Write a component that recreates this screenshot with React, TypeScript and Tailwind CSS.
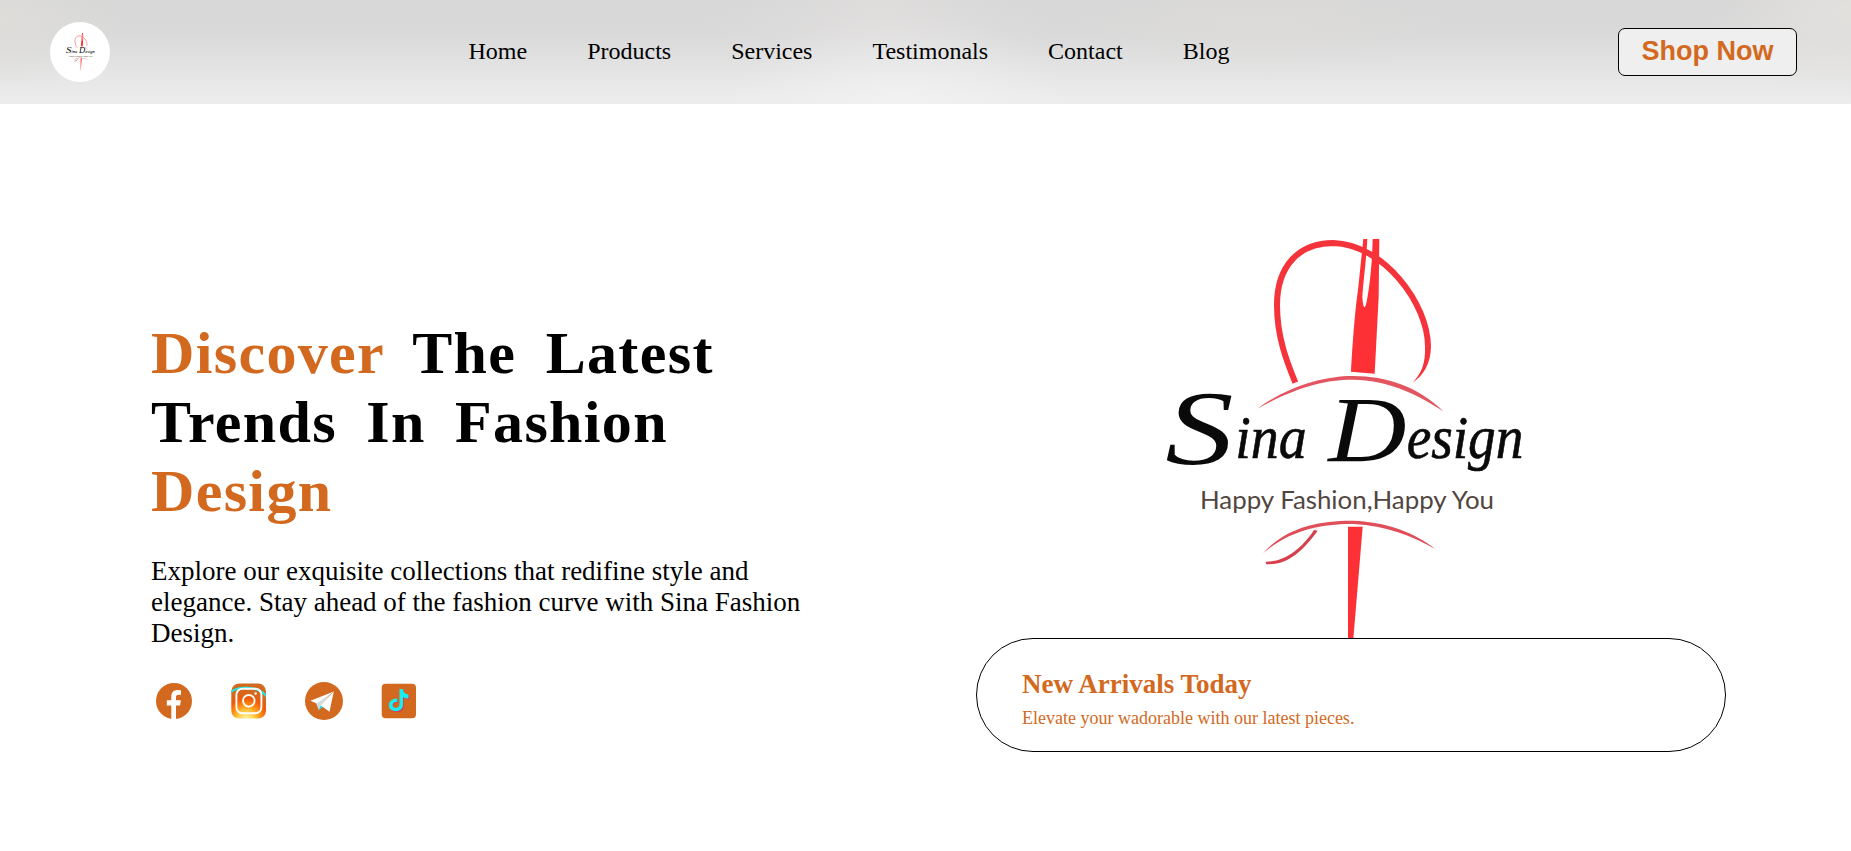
const navItems = ['Home', 'Products', 'Services', 'Testimonals', 'Contact', 'Blog'];

function Logo({ viewBox, className }: { viewBox: string; className: string }) {
  return (
    <svg viewBox={viewBox} className={className} preserveAspectRatio="none" role="img" aria-label="Sina Design">
      <path d="M676 -40 H708 L718 57 L716 230 L704 461 L633 455 C640 330 648 250 654 210 L670 57Z" fill="#fd3035" />
      <path d="M686 20 L682 57 C678 130 669 190 667 232 Q671 284 680 245 C690 195 697 120 698 57 L696 20Z" fill="#fff" />
      <path d="M466 488 C440 425 411 350 411 255 C411 140 475 69 580 69 C730 73 864 250 864 380" fill="none" stroke="#f5333a" strokeWidth="18" />
      <path d="M855 379 C857 430 845 460 818 488 C852 466 872 430 873 379Z" fill="#f5333a" />
      <path d="M352 566 C450 495 560 467 640 468 C740 468 835 500 910 574 C820 515 740 482 640 479 C560 478 470 500 352 566Z" fill="#e35560" />
      <path d="M369 1000 C440 920 540 901 640 902 C740 906 825 938 886 987 C815 948 740 917 640 912 C545 911 450 930 369 1000Z" fill="#e04e5a" />
      <path d="M522 930 L533 932 C490 992 440 1038 378 1032 L377 1025 C435 1026 486 985 522 930Z" fill="#d6404c" />
      <path d="M624 920 H668 L628 1400 H624Z" fill="#fd3035" />
      <g fontFamily="'Liberation Serif', serif" fontStyle="italic" fill="#0a0a0a" stroke="#0a0a0a" strokeWidth="2">
        <text x="76" y="732" fontSize="315" textLength="205" lengthAdjust="spacingAndGlyphs" strokeWidth="0">S</text>
        <text x="286" y="714" fontSize="186" textLength="214" lengthAdjust="spacingAndGlyphs">ina</text>
        <text x="565" y="722" fontSize="280" textLength="235" lengthAdjust="spacingAndGlyphs" strokeWidth="0">D</text>
        <text x="800" y="714" fontSize="186" textLength="350" lengthAdjust="spacingAndGlyphs">esign</text>
      </g>
      <text x="180" y="868" fontFamily="Lato, 'Noto Sans', sans-serif" fontSize="77" fill="#51463f" textLength="882" lengthAdjust="spacingAndGlyphs">
        Happy Fashion,Happy You
      </text>
    </svg>
  );
}

function Facebook() {
  return (
    <svg viewBox="0 0 44 44" className="size-11">
      <circle cx="22" cy="22" r="18" fill="#d2691e" />
      <path d="M19.300 40 V26.500 H14.800 V21.300 H19.300 V17.500 C19.300 13 22 11 25.700 11 C27.400 11 29 11.300 29 11.300 V15.700 H26.700 C24.600 15.700 24 16.900 24 18.300 V21.300 H28.900 L28.100 26.500 H24 V40Z" fill="#fff" />
    </svg>
  );
}

function Instagram() {
  return (
    <svg viewBox="0 0 44 44" className="size-11">
      <defs>
        <radialGradient id="glow" cx="0.42" cy="1.02" r="0.78">
          <stop offset="0" stopColor="#fff3b0" />
          <stop offset="0.28" stopColor="#ffd34a" />
          <stop offset="0.55" stopColor="#fb8a10" />
          <stop offset="0.75" stopColor="#f05a0c" />
          <stop offset="1" stopColor="#d2691e" />
        </radialGradient>
        <clipPath id="tile"><rect x="4.300" y="4.500" width="34.700" height="35" rx="8" /></clipPath>
      </defs>
      <g clipPath="url(#tile)">
        <rect x="4" y="4" width="36" height="36" fill="url(#glow)" />
        <path d="M4 13 C10 7.500 31 5.500 40 18" fill="none" stroke="#19e8e4" strokeWidth="2" />
      </g>
      <rect x="9.400" y="9.700" width="25" height="24.600" rx="6" fill="none" stroke="#fff" strokeWidth="1.900" />
      <circle cx="21.800" cy="21.800" r="5.800" fill="none" stroke="#fff" strokeWidth="1.900" />
      <circle cx="28.600" cy="14.500" r="1.200" fill="#fff" />
    </svg>
  );
}

function Telegram() {
  return (
    <svg viewBox="0 0 44 44" className="size-11">
      <circle cx="22" cy="22" r="19" fill="#d2691e" />
      <path d="M14.500 24 L17 31 L22 27Z" fill="#19e0dc" />
      <path d="M14 24 L31 12.500 L19 26 L16.800 31Z" fill="#d3dde0" />
      <path d="M8.500 21.800 L31.800 12.600 L14.500 24.400Z" fill="#fff" />
      <path d="M31.800 12.600 L27.500 32.800 L18.500 26.300Z" fill="#fff" />
    </svg>
  );
}

function TikTok() {
  const note = 'M22.500 10 H26 C26.300 13.500 28.500 15.300 31.500 15.600 V19.500 C29.400 19.500 27.500 18.900 26 17.900 V25.500 C26 33 16.500 34 12.800 29.500 C10 25 13.600 19 20.300 19.500 V23 C17 22.500 15.200 24.600 15.800 27 C17 30 22.500 29.400 22.500 25.300Z';
  return (
    <svg viewBox="0 0 44 44" className="size-11">
      <rect x="4.700" y="4.800" width="34.300" height="34.400" rx="4" fill="#d2691e" />
      <path d={note} fill="#d6336c" transform="translate(0.8 0.9)" />
      <path d={note} fill="#16f0ee" />
    </svg>
  );
}

export default function App() {
  return (
    <div className="flex h-[851px] flex-col overflow-hidden bg-white font-['Liberation_Serif',serif] text-black">
      <header className="flex h-[104px] shrink-0 items-center bg-[radial-gradient(ellipse_170px_90px_at_900px_104px,rgba(244,243,243,0.75),transparent),radial-gradient(ellipse_180px_70px_at_880px_15px,rgba(228,225,224,0.6),transparent),radial-gradient(ellipse_140px_90px_at_1851px_10px,rgba(230,227,224,0.8),transparent),radial-gradient(ellipse_200px_60px_at_1260px_20px,rgba(222,220,218,0.7),transparent),radial-gradient(ellipse_130px_70px_at_0px_20px,rgba(222,221,218,0.9),transparent),linear-gradient(to_bottom,#d7d7d7_0%,#dadada_35%,#e4e4e4_68%,#ececec_95%)] pl-[50px] pr-[54px]">
        <div className="flex size-[60px] items-center justify-center rounded-full bg-white">
          <Logo viewBox="0 -40 1200 1440" className="h-[38px] w-8" />
        </div>
        <nav className="ml-[358.500px] flex gap-[60px] pb-0.5 text-2xl leading-[27px]">
          {navItems.map((item) => (
            <a key={item} href="#">{item}</a>
          ))}
        </nav>
        <button className="ml-auto h-12 w-[179px] rounded-[7px] border border-black bg-[#efefef] pb-0.5 font-['Liberation_Sans',sans-serif] text-[27px] font-bold leading-[31px] text-[#d2691e]">
          Shop Now
        </button>
      </header>
      <main className="flex justify-between pl-[151px] pr-[125px]">
        <section className="w-[660px] pt-[215px]">
          <h1 className="text-[60px] font-bold leading-[69px] tracking-[1.350px] [word-spacing:13px]">
            <span className="text-[#d2691e]">Discover</span> The Latest<br />
            Trends In Fashion<br />
            <span className="text-[#d2691e]">Design</span>
          </h1>
          <p className="mt-[30px] text-[27px] leading-[31px]">
            Explore our exquisite collections that redifine style and elegance. Stay ahead of the fashion curve with Sina Fashion Design.
          </p>
          <div className="mt-[30px] flex gap-[31px] pl-px">
            <Facebook />
            <Instagram />
            <Telegram />
            <TikTok />
          </div>
        </section>
        <section className="flex w-[750px] flex-col pt-[135px]">
          <Logo viewBox="0 57 1200 1197" className="ml-[164px] h-[399px] w-[400px]" />
          <div className="h-[114px] rounded-[60px] border border-black pl-[45px] pt-[30px] text-[#d2691e]">
            <h2 className="text-[27px] font-bold leading-[31px]">New Arrivals Today</h2>
            <p className="mt-2 text-lg leading-5">Elevate your wadorable with our latest pieces.</p>
          </div>
        </section>
      </main>
    </div>
  );
}
